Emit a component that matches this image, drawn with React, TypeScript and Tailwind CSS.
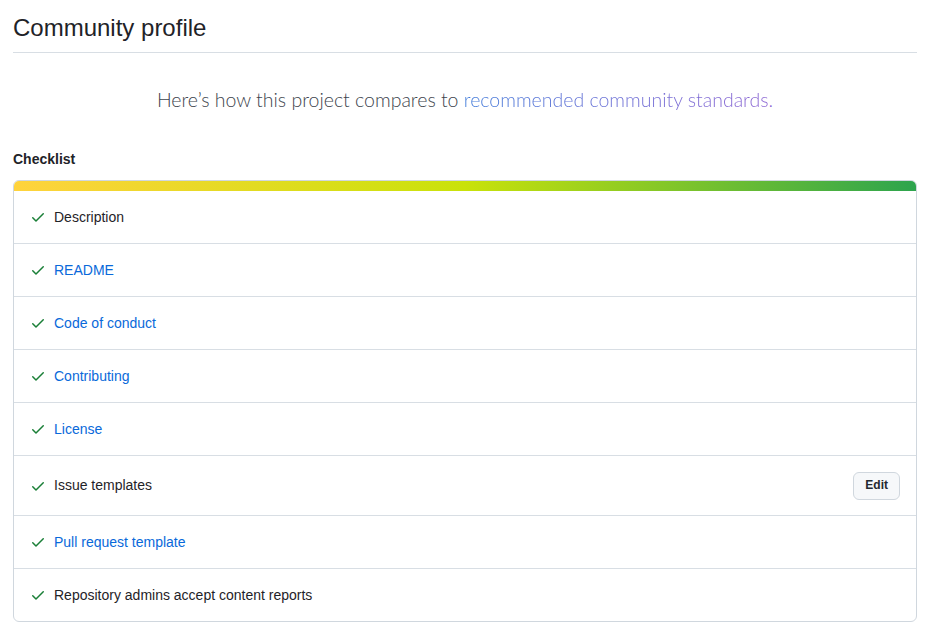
const items: { label: string; link: boolean; edit?: boolean }[] = [
  { label: "Description", link: false },
  { label: "README", link: true },
  { label: "Code of conduct", link: true },
  { label: "Contributing", link: true },
  { label: "License", link: true },
  { label: "Issue templates", link: false, edit: true },
  { label: "Pull request template", link: true },
  { label: "Repository admins accept content reports", link: false },
];

function Check() {
  return (
    <svg viewBox="0 0 16 16" width="16" height="16" className="shrink-0 fill-[#1a7f37]">
      <path d="M13.78 4.22a.75.75 0 0 1 0 1.06l-7.25 7.25a.75.75 0 0 1-1.06 0L2.22 9.28a.751.751 0 0 1 .018-1.042.751.751 0 0 1 1.042-.018L6 10.94l6.72-6.72a.75.75 0 0 1 1.06 0Z" />
    </svg>
  );
}

export default function App() {
  return (
    <div className="min-h-[637px] bg-white pl-[13px] pr-[10px] font-['Segoe_UI','Liberation_Sans',sans-serif] text-[#1f2328]">
      <div className="border-b border-[#d8dee4] pt-[10px] pb-[6px]">
        <h1 className="text-[24px] leading-[36px] font-normal">Community profile</h1>
      </div>

      <p className="mt-[32px] text-center font-['Lato',sans-serif] text-[19.5px] leading-[30px] font-light text-[#3d444d]">
        Here’s how this project compares to{" "}
        <a className="bg-gradient-to-r from-[#3f7ad9] to-[#8a63d2] bg-clip-text text-transparent">
          recommended community standards
        </a>
        <span className="text-[#8a63d2]">.</span>
      </p>

      <h2 className="mt-[34px] text-[14px] leading-[21px] font-semibold">Checklist</h2>

      <div className="mt-[10px] overflow-hidden rounded-[6px] border border-[#d0d7de]">
        <div className="h-[10px] bg-[linear-gradient(to_right,#ffd33d,#c9e20a_50%,#2da44e)]" />
        {items.map((it, i) => (
          <div
            key={it.label}
            className={
              "flex items-center px-4 py-[15.5px] text-[14px] leading-[21px] " +
              (i > 0 ? "border-t border-[#d8dee4]" : "")
            }
          >
            <Check />
            <span className={"ml-2 " + (it.link ? "text-[#0969da]" : "text-[#1f2328]")}>{it.label}</span>
            {it.edit && (
              <button className="ml-auto h-[28px] rounded-[6px] border border-[#d0d7de] bg-[#f6f8fa] px-[11px] text-[12px] font-semibold text-[#24292f]">
                Edit
              </button>
            )}
          </div>
        ))}
      </div>
    </div>
  );
}
